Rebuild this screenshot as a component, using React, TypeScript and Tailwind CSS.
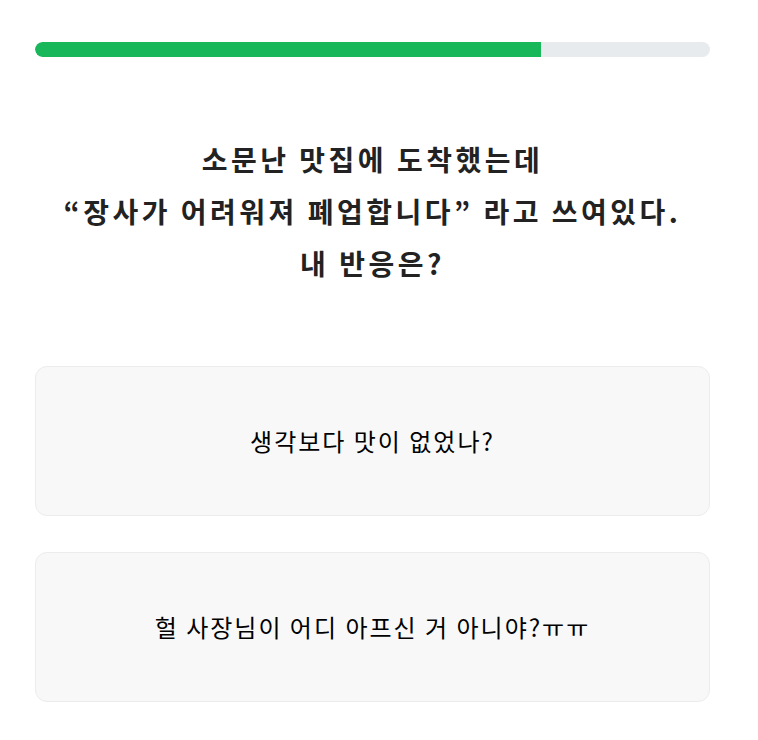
const choices = ['생각보다 맛이 없었나?', '헐 사장님이 어디 아프신 거 아니야?ㅠㅠ'];

export default function App() {
  const progress = 75;

  return (
    <div
      className="min-h-screen bg-white"
      style={{ fontFamily: '"Noto Sans CJK KR", "Noto Sans", sans-serif' }}
    >
      <div className="w-[675px] ml-[35px] pt-[42px]">
        {/* Progress */}
        <div className="h-[15px] w-full rounded-full bg-[#e8ebed] overflow-hidden">
          <div className="h-full bg-[#17b75a] rounded-l-full" style={{ width: `${progress}%` }} />
        </div>

        {/* Question */}
        <h1 className="mt-[76px] text-center text-[28px] font-bold leading-[52px] tracking-[3.5px] text-[#222]">
          소문난 맛집에 도착했는데
          <br />
          “장사가 어려워져 폐업합니다” 라고 쓰여있다.
          <br />
          내 반응은?
        </h1>

        {/* Choices */}
        <div className="mt-[77px] flex flex-col gap-[36px]">
          {choices.map((c) => (
            <button
              key={c}
              className="h-[150px] w-full rounded-xl border border-[#ececec] bg-[#f8f8f8] text-[24px] tracking-[2px] text-black"
            >
              {c}
            </button>
          ))}
        </div>
      </div>
    </div>
  );
}
